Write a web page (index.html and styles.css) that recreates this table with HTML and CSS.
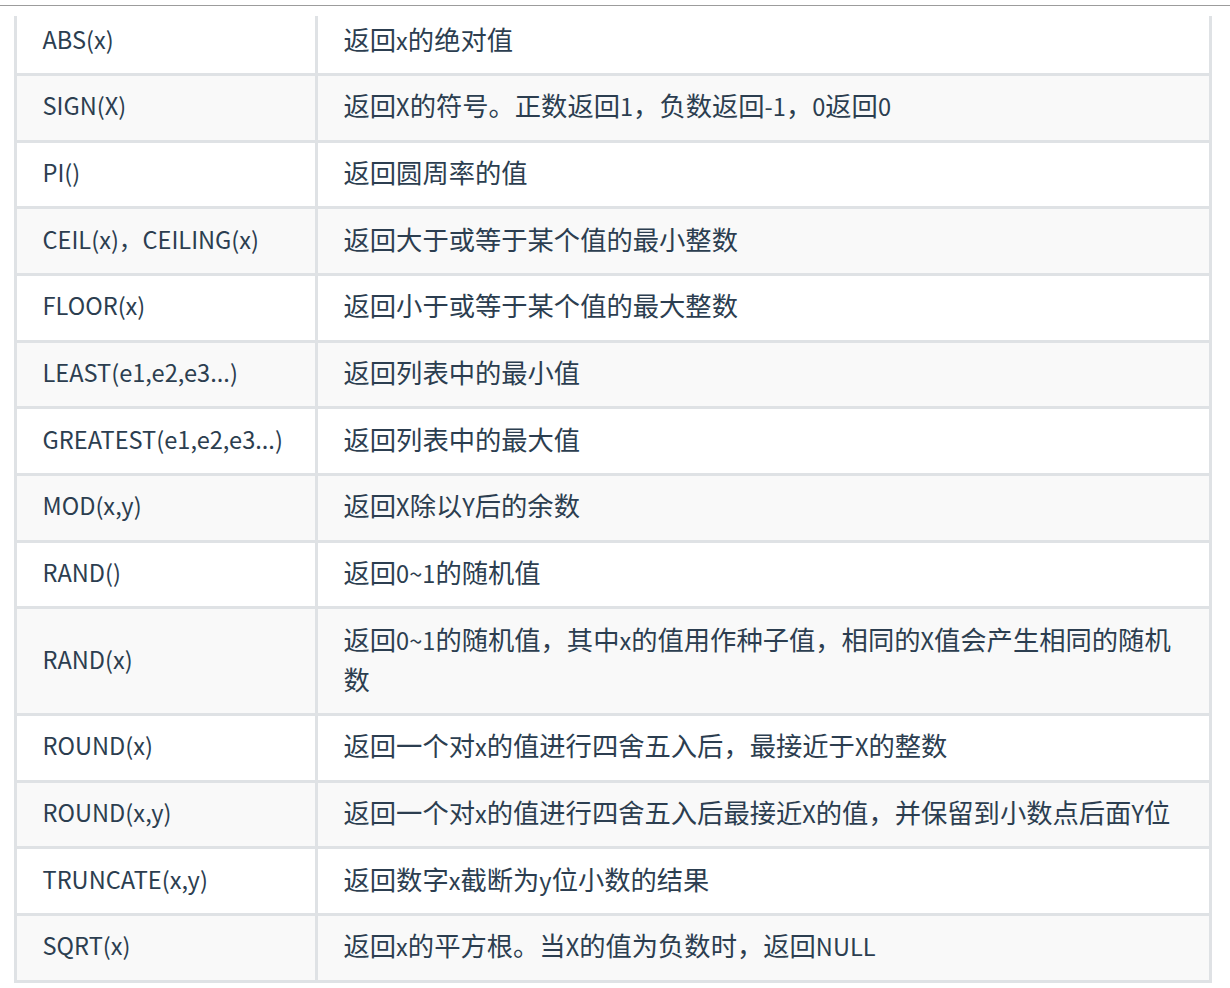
FILE: index.html
```html
<!DOCTYPE html>
<html lang="zh-CN">
<head>
<meta charset="utf-8">
<title>数学函数</title>
<link rel="stylesheet" href="styles.css">
</head>
<body>
<div class="topline"></div>
<div class="wrap">
<table class="fn-table">
<tbody>
<tr><td class="name">ABS(x)</td><td class="desc">返回<span class="lat">x</span>的绝对值</td></tr>
<tr><td class="name">SIGN(X)</td><td class="desc">返回<span class="lat">X</span>的符号。正数返回<span class="lat">1</span>，负数返回<span class="lat">-1</span>，<span class="lat">0</span>返回<span class="lat">0</span></td></tr>
<tr><td class="name">PI()</td><td class="desc">返回圆周率的值</td></tr>
<tr><td class="name">CEIL(x)，CEILING(x)</td><td class="desc">返回大于或等于某个值的最小整数</td></tr>
<tr><td class="name">FLOOR(x)</td><td class="desc">返回小于或等于某个值的最大整数</td></tr>
<tr><td class="name">LEAST(e1,e2,e3...)</td><td class="desc">返回列表中的最小值</td></tr>
<tr><td class="name">GREATEST(e1,e2,e3...)</td><td class="desc">返回列表中的最大值</td></tr>
<tr><td class="name">MOD(x,y)</td><td class="desc">返回<span class="lat">X</span>除以<span class="lat">Y</span>后的余数</td></tr>
<tr><td class="name">RAND()</td><td class="desc">返回<span class="lat">0~1</span>的随机值</td></tr>
<tr><td class="name">RAND(x)</td><td class="desc">返回<span class="lat">0~1</span>的随机值，其中<span class="lat">x</span>的值用作种子值，相同的<span class="lat">X</span>值会产生相同的随机数</td></tr>
<tr><td class="name">ROUND(x)</td><td class="desc">返回一个对<span class="lat">x</span>的值进行四舍五入后，最接近于<span class="lat">X</span>的整数</td></tr>
<tr><td class="name">ROUND(x,y)</td><td class="desc">返回一个对<span class="lat">x</span>的值进行四舍五入后最接近<span class="lat">X</span>的值，并保留到小数点后面<span class="lat">Y</span>位</td></tr>
<tr><td class="name">TRUNCATE(x,y)</td><td class="desc">返回数字<span class="lat">x</span>截断为<span class="lat">y</span>位小数的结果</td></tr>
<tr><td class="name">SQRT(x)</td><td class="desc">返回<span class="lat">x</span>的平方根。当<span class="lat">X</span>的值为负数时，返回<span class="lat">NULL</span></td></tr>
</tbody>
</table>
</div>
</body>
</html>
```
FILE: styles.css
```css
html, body {
  margin: 0;
  padding: 0;
  background: #ffffff;
}

body {
  font-family: "Noto Sans CJK SC", "Noto Sans", sans-serif;
  color: #2c3e50;
}

.topline {
  margin-top: 5px;
  height: 1px;
  background: #9c9c9c;
}

.wrap {
  padding-top: 10px;
  padding-left: 14px;
}

.fn-table {
  width: 1198px;
  table-layout: fixed;
  border-collapse: separate;
  border-spacing: 0;
  font-size: 26.3px;
  line-height: 40px;
}

.fn-table td {
  box-sizing: border-box;
  padding: 9.33px 26.67px 14.33px 25.5px;
  border-right: 3px solid #dfe2e5;
  border-bottom: 3px solid #dfe2e5;
  vertical-align: middle;
  text-align: left;
}

.fn-table td.name {
  width: 304px;
  font-size: 23.6px;
  border-left: 3px solid #dfe2e5;
}

.fn-table .lat {
  font-size: 23.6px;
  line-height: 1;
}

.fn-table tr:first-child td {
  padding-top: 2.67px;
}

.fn-table tr:nth-child(2n) td {
  background: #f9f9f9;
}
```
